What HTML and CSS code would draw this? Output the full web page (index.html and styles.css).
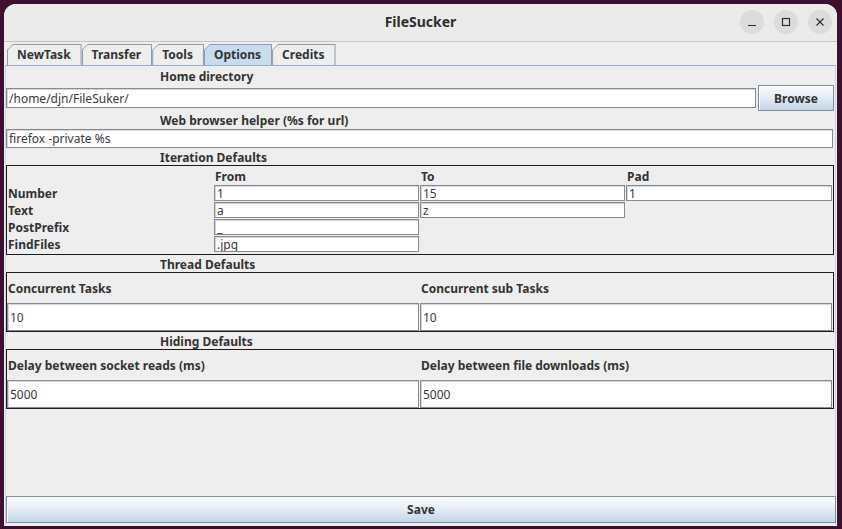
FILE: index.html
```html
<!DOCTYPE html>
<html>
<head>
<meta charset="utf-8">
<title>FileSucker</title>
<link rel="stylesheet" href="styles.css">
</head>
<body>
<div class="window">
  <header class="titlebar">
    <div></div>
    <div class="title">FileSucker</div>
    <div class="controls">
      <span class="ctl"><svg width="24" height="24" viewBox="0 0 24 24"><path d="M8 15.5h8" stroke="#2e2e2e" stroke-width="1.2" fill="none"/></svg></span>
      <span class="ctl"><svg width="24" height="24" viewBox="0 0 24 24"><rect x="8.5" y="8.5" width="7" height="7" stroke="#2e2e2e" stroke-width="1.2" fill="none"/></svg></span>
      <span class="ctl"><svg width="24" height="24" viewBox="0 0 24 24"><path d="M8.5 8.5l7 7M15.5 8.5l-7 7" stroke="#2e2e2e" stroke-width="1.2" fill="none"/></svg></span>
    </div>
  </header>

  <nav class="tabs">
    <div class="tab"><div class="tab-in">NewTask</div></div>
    <div class="tab"><div class="tab-in">Transfer</div></div>
    <div class="tab"><div class="tab-in">Tools</div></div>
    <div class="tab active"><div class="tab-in">Options</div></div>
    <div class="tab"><div class="tab-in">Credits</div></div>
  </nav>

  <main class="panel">
    <div class="sec-label h19">Home directory</div>
    <div class="row-home">
      <div class="field f20">/home/djn/FileSuker/</div>
      <button class="btn browse">Browse</button>
    </div>
    <div class="sec-label h18">Web browser helper (%s for url)</div>
    <div class="field f19 wide">firefox -private %s</div>
    <div class="sec-label h17">Iteration Defaults</div>

    <section class="box iter">
      <div></div>
      <div class="lbl hdr">From</div>
      <div class="lbl hdr">To</div>
      <div class="lbl hdr">Pad</div>

      <div class="lbl row">Number</div>
      <div class="cell"><div class="field f16">1</div></div>
      <div class="cell"><div class="field f16">15</div></div>
      <div class="cell"><div class="field f16">1</div></div>

      <div class="lbl row">Text</div>
      <div class="cell"><div class="field f16">a</div></div>
      <div class="cell"><div class="field f16">z</div></div>
      <div class="cell"></div>

      <div class="lbl row">PostPrefix</div>
      <div class="cell"><div class="field f16">_</div></div>
      <div class="cell"></div>
      <div class="cell"></div>

      <div class="lbl row">FindFiles</div>
      <div class="cell"><div class="field f16">.jpg</div></div>
      <div class="cell"></div>
      <div class="cell"></div>
    </section>

    <div class="sec-label h17">Thread Defaults</div>
    <section class="box pair">
      <div class="lbl plbl">Concurrent Tasks</div>
      <div class="lbl plbl">Concurrent sub Tasks</div>
      <div class="field f28">10</div>
      <div class="field f28">10</div>
    </section>

    <div class="sec-label h17">Hiding Defaults</div>
    <section class="box pair">
      <div class="lbl plbl">Delay between socket reads (ms)</div>
      <div class="lbl plbl">Delay between file downloads (ms)</div>
      <div class="field f28">5000</div>
      <div class="field f28">5000</div>
    </section>

    <div class="spacer"></div>
    <button class="btn save">Save</button>
  </main>
</div>
</body>
</html>
```

FILE: styles.css
```css
* { box-sizing: border-box; }

html, body {
  margin: 0;
  padding: 0;
}

body {
  width: 842px;
  height: 529px;
  background: #3d1030;
  padding: 4px 5px 3px 4px;
  font-family: "Noto Sans", "DejaVu Sans", sans-serif;
  font-size: 12px;
  color: #333333;
  overflow: hidden;
}

.window {
  width: 833px;
  height: 522px;
  background: #eeeeee;
  border-radius: 12px 12px 0 0;
  overflow: hidden;
  display: flex;
  flex-direction: column;
}

/* Title bar */
.titlebar {
  height: 38px;
  flex: none;
  background: #ebebeb;
  border-bottom: 1px solid #c4c4c4;
  display: grid;
  grid-template-columns: 1fr auto 1fr;
  align-items: center;
}

.title {
  font-weight: bold;
  font-size: 14px;
  color: #2e2e2e;
  padding-bottom: 2px;
}

.controls {
  display: flex;
  justify-content: flex-end;
  gap: 10px;
  padding-right: 5px;
  padding-bottom: 2px;
}

.ctl {
  width: 24px;
  height: 24px;
  border-radius: 50%;
  background: #dcdcdc;
  display: block;
}

.ctl svg { display: block; }

/* Tabs */
.tabs {
  flex: none;
  display: flex;
  padding: 2px 0 0 3px;
  height: 23px;
  gap: 0;
}

.tab {
  height: 21px;
  background: #8e9cad;
  padding: 1px 1px 0 1px;
  clip-path: polygon(6px 0, 100% 0, 100% 100%, 0 100%, 0 6px);
}

.tab-in {
  height: 100%;
  background: #eeeeee;
  clip-path: polygon(5px 0, 100% 0, 100% 100%, 0 100%, 0 5px);
  font-weight: bold;
  font-size: 12px;
  color: #333333;
  line-height: 19px;
  padding: 0 10px 0 9px;
}

.tab.active { height: 22px; }
.tab.active .tab-in { background: #c8dbef; }

/* Panel */
.panel {
  flex: 1;
  margin: 0 1px 1px 1px;
  border-top: 1px solid #97aecb;
  border-left: 1px solid #c3d6ea;
  border-right: 1px solid #c3d6ea;
  display: flex;
  flex-direction: column;
  position: relative;
}

.sec-label {
  font-weight: bold;
  padding-left: 154px;
  display: flex;
  align-items: center;
}
.h19 { height: 19px; padding-top: 1px; }
.h18 { height: 18px; }
.h17 { height: 17px; padding-top: 1px; }

.field {
  background: #ffffff;
  border: 1px solid #858b92;
  box-shadow: inset 1px 1px 0 #d6d6d6;
  color: #3a3a3a;
  font-size: 12px;
  padding-left: 2px;
  display: flex;
  align-items: center;
  white-space: nowrap;
  overflow: hidden;
}
.f20 { height: 20px; }
.f19 { height: 19px; }
.f16 { height: 16px; }
.f28 { height: 28px; }

.wide { margin-right: 2px; }

.row-home {
  height: 26px;
  display: flex;
  align-items: center;
}
.row-home .field { flex: 1; }

.btn {
  font-family: "Noto Sans", "DejaVu Sans", sans-serif;
  font-weight: bold;
  font-size: 12px;
  color: #333333;
  border: 1px solid #7f8d9c;
  background: linear-gradient(#f9fbfd 0%, #e9f0f7 40%, #c3d5e8 100%);
  box-shadow: inset 1px 1px 0 #ffffff;
  padding: 0;
  margin: 0;
}

.browse {
  width: 76px;
  height: 26px;
  margin-left: 2px;
  margin-right: 1px;
}

/* Boxes */
.box {
  border: 1px solid #1c1c1c;
  margin-right: 1px;
}

.lbl { font-weight: bold; white-space: nowrap; }

.iter {
  height: 90px;
  display: grid;
  grid-template-columns: 207px 206px 206px 1fr;
  grid-template-rows: 19px repeat(4, 17px);
}
.iter .hdr { padding-left: 1px; line-height: 19px; padding-top: 1px; }
.iter .row { padding-left: 1px; line-height: 17px; }
.iter .cell .field { margin-right: 1px; }

.pair {
  height: 60px;
  display: grid;
  grid-template-columns: 413px 1fr;
  grid-template-rows: 30px 28px;
}
.pair .plbl { padding-left: 1px; display: flex; align-items: center; }
.pair .field { margin-right: 1px; }

.spacer { flex: 1; }

.save {
  height: 27px;
  margin: 0 0 2px 0;
  width: 830px;
}
```
